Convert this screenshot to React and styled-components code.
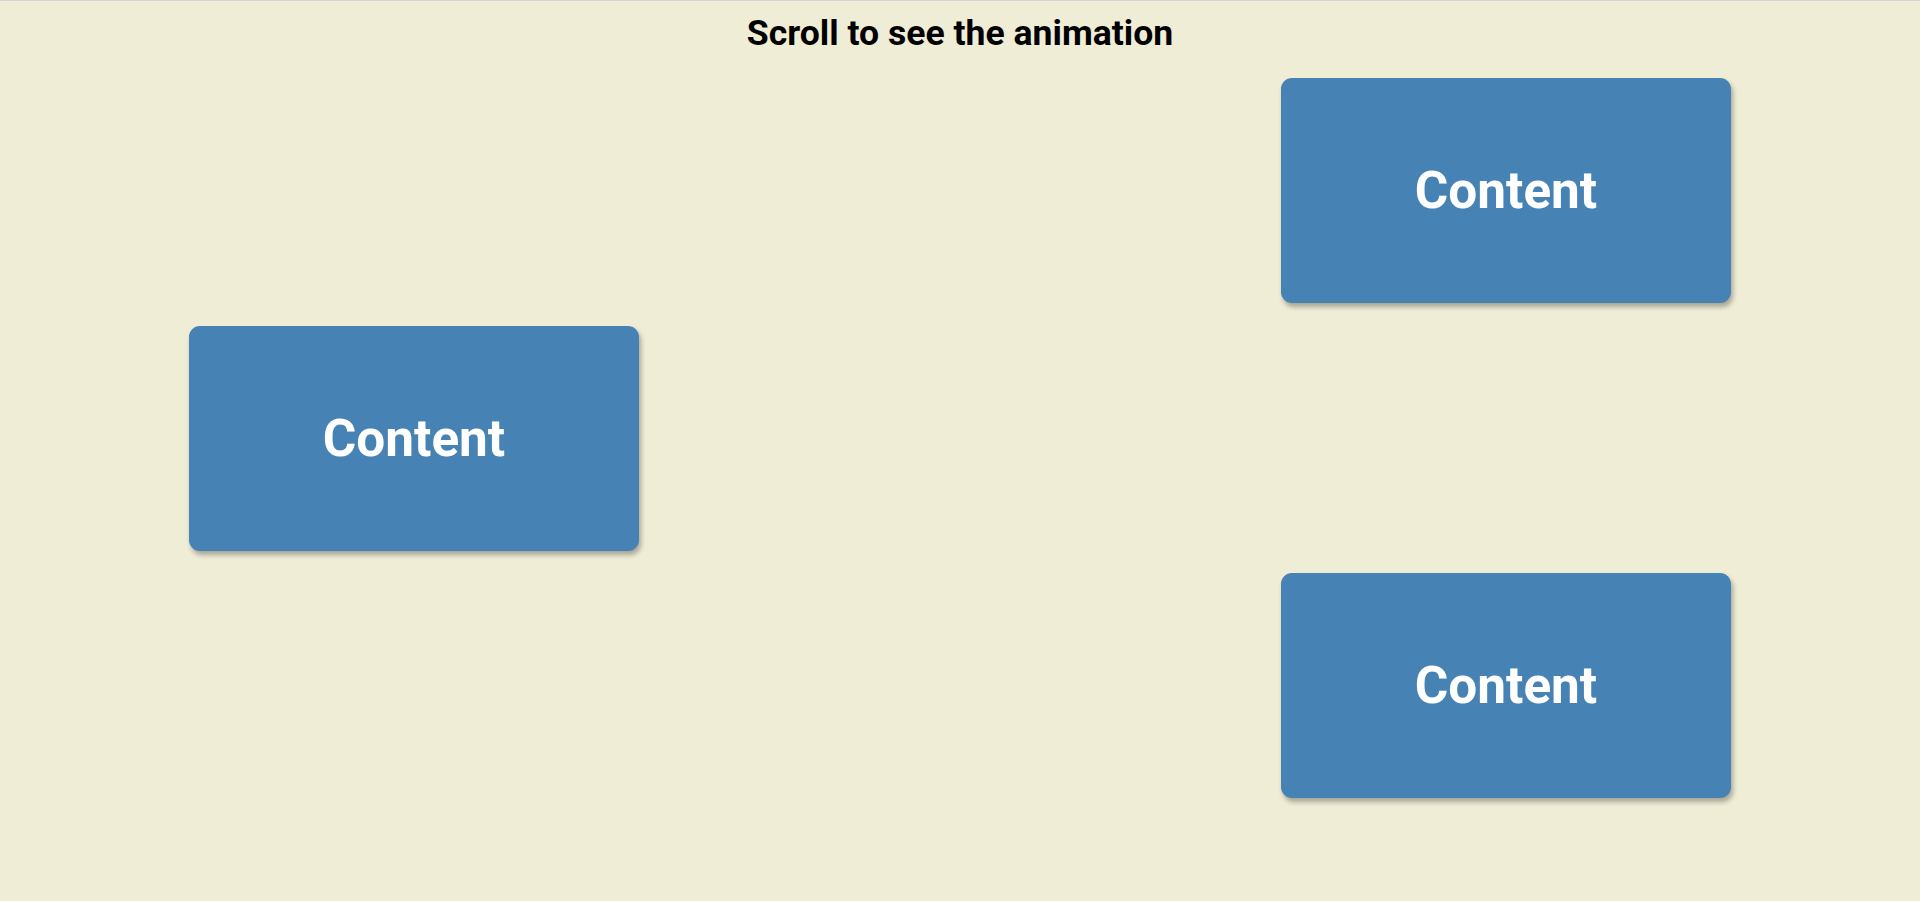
import React from "react";
import styled, { createGlobalStyle } from "styled-components";

const GlobalStyle = createGlobalStyle`
  * { box-sizing: border-box; }
  html, body {
    margin: 0;
    padding: 0;
    background: #efedd6;
    overflow: hidden;
  }
  body {
    font-family: Roboto, "Liberation Sans", Arial, sans-serif;
  }
`;

const Page = styled.div`
  min-height: 901px;
  border-top: 1px solid #d4d4d4;
  background: #efedd6;
  display: flex;
  flex-direction: column;
  align-items: center;
  overflow: hidden;
`;

const Title = styled.h1`
  margin: 11px 0 13px;
  font-size: 35.6px;
  font-weight: 700;
  color: #000;
  line-height: 42px;
  text-align: center;
`;

const Track = styled.div`
  width: 1542px;
  display: flex;
  flex-direction: column;
`;

const Box = styled.div`
  align-self: ${(p) => (p.$side === "left" ? "flex-start" : "flex-end")};
  width: 450px;
  height: 225px;
  margin: 11.25px 0;
  background: #4682b4;
  color: #fff;
  border-radius: 11px;
  box-shadow: 2px 4px 5px rgba(0, 0, 0, 0.3);
  display: flex;
  align-items: center;
  justify-content: center;
`;

const BoxLabel = styled.h2`
  margin: 0;
  font-size: 51.3px;
  font-weight: 700;
`;

const boxes = ["right", "left", "right"];

export default function App() {
  return (
    <>
      <GlobalStyle />
      <Page>
        <Title>Scroll to see the animation</Title>
        <Track>
          {boxes.map((side, i) => (
            <Box key={i} $side={side}>
              <BoxLabel>Content</BoxLabel>
            </Box>
          ))}
        </Track>
      </Page>
    </>
  );
}
